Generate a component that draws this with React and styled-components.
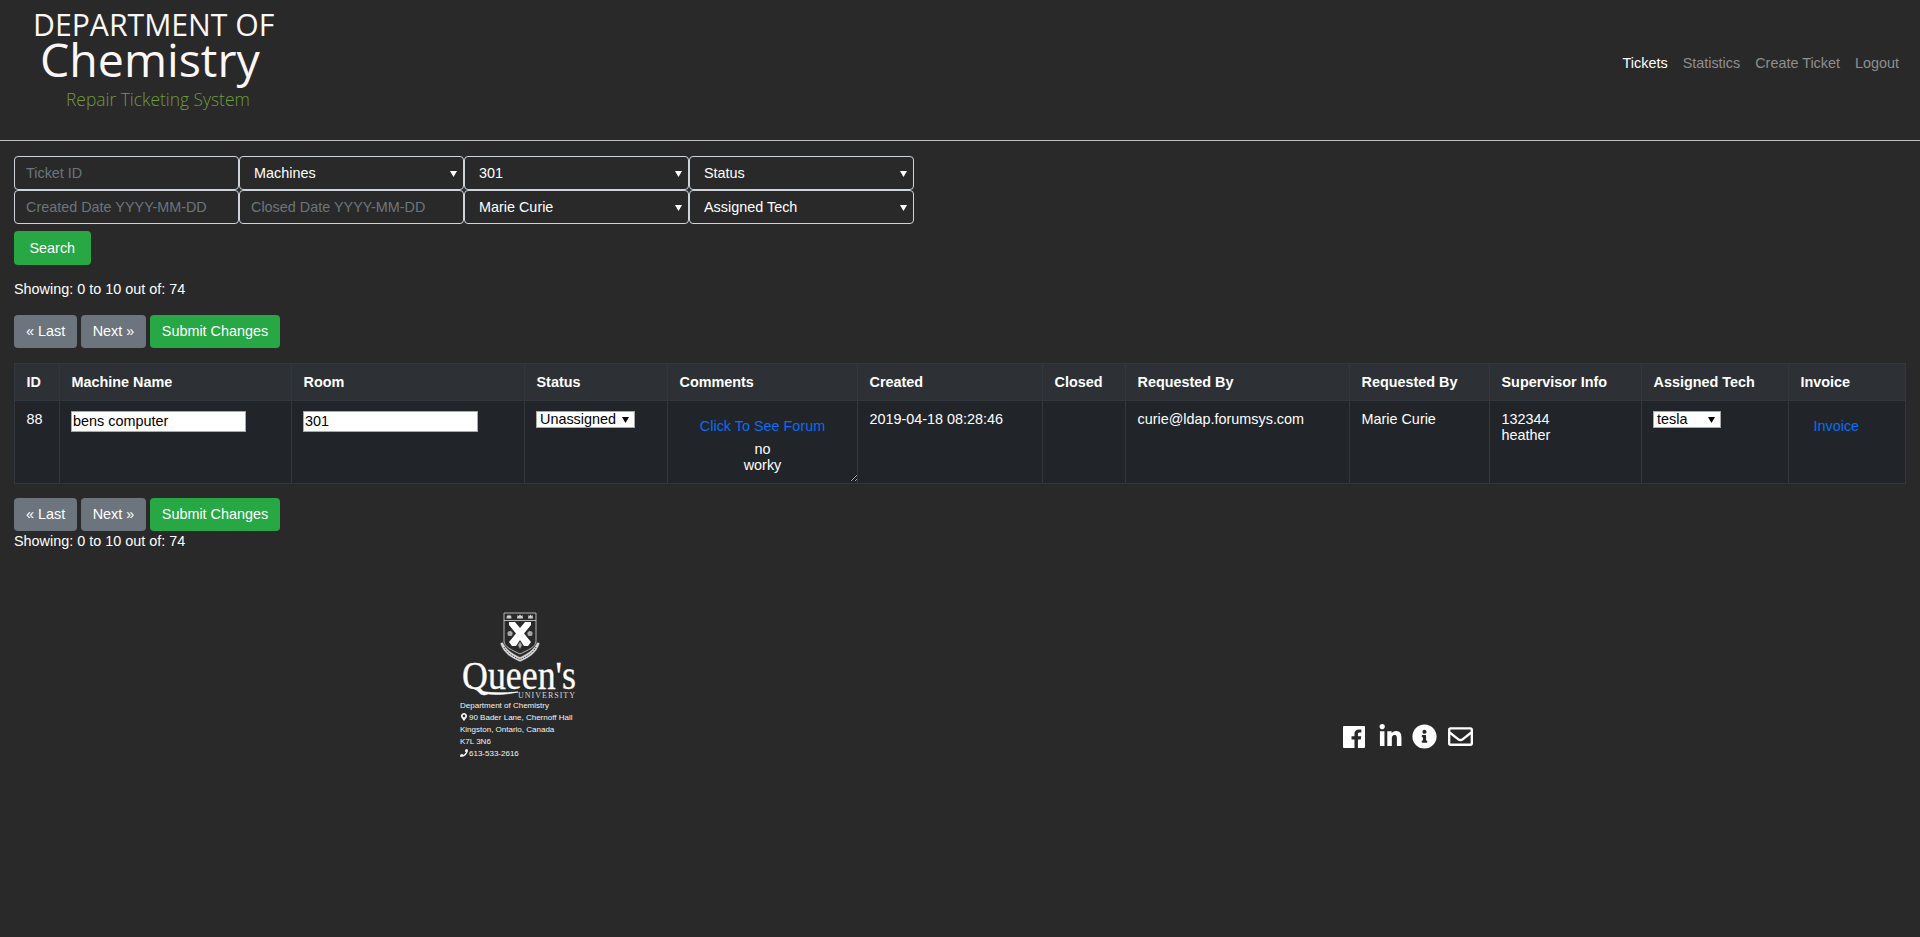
import React from "react";
import styled, { createGlobalStyle } from "styled-components";
import { FaLinkedinIn, FaInfoCircle, FaRegEnvelope, FaMapMarkerAlt, FaPhone } from "react-icons/fa";

const whiteCaret = "url(\"data:image/svg+xml,%3Csvg xmlns='http://www.w3.org/2000/svg' width='7' height='7'%3E%3Cpath d='M0 1h7L3.5 7z' fill='%23fff'/%3E%3C/svg%3E\")";
const blackCaret = "url(\"data:image/svg+xml,%3Csvg xmlns='http://www.w3.org/2000/svg' width='7' height='7'%3E%3Cpath d='M0 1h7L3.5 7z' fill='%23000'/%3E%3C/svg%3E\")";

const Global = createGlobalStyle`
  html, body { margin: 0; padding: 0; min-height: 100%; background: #292929; }
  body { font-family: "Liberation Sans", Arial, sans-serif; font-size: 14.4px; line-height: 21px; color: #fff; }
  * { box-sizing: border-box; }
`;

const Page = styled.div`
  min-height: 937px;
  background: #292929;
`;

const Header = styled.header`
  height: 141px;
  display: flex;
  justify-content: space-between;
  align-items: flex-start;
  padding: 0 21px 0 33px;
  border-bottom: 1px solid #bdbdbd;
`;

const Brand = styled.div`
  display: flex;
  flex-direction: column;
  align-items: flex-start;
  padding-top: 9px;
  font-family: "Open Sans", sans-serif;
  font-weight: 400;
  color: #fbf7f7;
`;

const BrandTop = styled.div`
  font-size: 30.2px;
  line-height: 32px;
`;

const BrandMain = styled.div`
  font-size: 46.5px;
  line-height: 36px;
  margin-left: 7px;
`;

const BrandSub = styled.div`
  font-size: 17.4px;
  font-weight: 300;
  line-height: 22px;
  margin-left: 33px;
  margin-top: 11px;
  color: #6f9a40;
`;

const Nav = styled.nav`
  display: flex;
  gap: 15px;
  margin-top: 53px;
`;

const NavLink = styled.a`
  color: ${(p) => (p.$active ? "#fff" : "#8f8f8f")};
  text-decoration: none;
`;

const Main = styled.main`
  padding: 15px 15px 0 14px;
`;

const FilterGrid = styled.form`
  display: grid;
  grid-template-columns: repeat(4, 225px);
  grid-auto-rows: 34px;
`;

const FilterInput = styled.input`
  height: 34px;
  padding: 0 11px;
  border: 1px solid #ced4da;
  border-radius: 4px;
  background: #292929;
  color: #fff;
  font: 14.4px "Liberation Sans", sans-serif;
  &::placeholder { color: #6c757d; opacity: 1; }
`;

const FilterSelect = styled.select`
  appearance: none;
  height: 34px;
  padding: 0 20px 0 14px;
  border: 1px solid #ced4da;
  border-radius: 4px;
  background: #292929 ${whiteCaret} no-repeat right 6px center;
  color: #fff;
  font: 14.4px "Liberation Sans", sans-serif;
`;

const Btn = styled.button`
  height: 33.6px;
  padding: 0 ${(p) => (p.$wide ? "15.5px" : "12px")};
  border: 0;
  border-radius: 4px;
  background: ${(p) => (p.$green ? "#28a745" : "#6c757d")};
  color: #fff;
  font: 14.4px "Liberation Sans", sans-serif;
`;

const SearchRow = styled.div`
  margin-top: 7px;
  display: flex;
`;

const Showing = styled.div`
  margin-top: ${(p) => p.$top || 0}px;
  height: 21px;
`;

const Pager = styled.div`
  display: flex;
  gap: 3.5px;
  margin-top: ${(p) => p.$top}px;
`;

const Table = styled.table`
  margin-top: 14.4px;
  width: 1891px;
  table-layout: fixed;
  border-collapse: collapse;
  background: #212529;
  border: 1px solid #32383e;
`;

const Th = styled.th`
  height: 37px;
  padding: 8px 11.5px 6px;
  text-align: left;
  font-weight: 700;
  background: #2d3136;
  border: 1px solid #32383e;
`;

const Td = styled.td`
  height: 83px;
  padding: 8px 11.5px 0;
  vertical-align: top;
  border: 1px solid #32383e;
`;

const CellInput = styled.input`
  display: block;
  width: 175px;
  height: 21px;
  margin: 2px 0 0 -0.5px;
  padding: 0 1px;
  border: 1px solid #a9a9a9;
  background: #fff;
  color: #000;
  font: 14.4px "Liberation Sans", sans-serif;
`;

const CellSelect = styled.select`
  appearance: none;
  display: block;
  width: ${(p) => p.$w}px;
  height: 17px;
  margin: 2px 0 0 -0.5px;
  padding: 0 0 0 3px;
  border: 1px solid #a9a9a9;
  border-radius: 0;
  background: #fff ${blackCaret} no-repeat right 5px center;
  color: #000;
  font: 14.4px/15px "Liberation Sans", sans-serif;
`;

const LinkBtn = styled.a`
  display: block;
  height: 34px;
  padding: 7px 13px;
  color: #0b6cf5;
  text-decoration: none;
  text-align: ${(p) => (p.$center ? "center" : "left")};
`;

const CommentBox = styled.textarea`
  display: block;
  width: calc(100% + 24px);
  height: 41px;
  margin: -2px -12px 0;
  padding: 0;
  border: 0;
  outline: 0;
  background: transparent;
  color: #fff;
  text-align: center;
  overflow: hidden;
  font: 14.4px/16.5px "Liberation Sans", sans-serif;
`;

const Stack = styled.div`
  line-height: 16px;
  margin-top: 2px;
`;

const Footer = styled.footer`
  display: flex;
  align-items: flex-end;
  padding: 60px 0 0 460px;
`;

const Contact = styled.div`
  width: 118px;
  display: flex;
  flex-direction: column;
`;

const LogoArt = styled.svg`
  display: block;
  width: 118px;
  height: 88px;
`;

const Address = styled.div`
  font-size: 8px;
  line-height: 12px;
  color: #f4f4f4;
  white-space: nowrap;
  svg { width: 8px; height: 8px; vertical-align: -1px; margin-right: 1px; }
`;

const Social = styled.div`
  display: flex;
  align-items: center;
  gap: 11px;
  margin: 0 0 11px 765px;
  color: #fff;
  font-size: 25px;
  line-height: 0;
`;

const FacebookIcon = styled.svg`
  width: 22px;
  height: 22px;
  margin-right: 2.4px;
`;

const LinkedinIcon = styled(FaLinkedinIn)`
  margin-right: -2px;
`;

const columns = [45, 232, 233, 143, 190, 185, 83, 224, 140, 152, 147, 117];
const heads = ["ID", "Machine Name", "Room", "Status", "Comments", "Created", "Closed", "Requested By", "Requested By", "Supervisor Info", "Assigned Tech", "Invoice"];

function FacebookSquare() {
  return (
    <FacebookIcon viewBox="0 0 24 24" aria-hidden="true">
      <path
        fillRule="evenodd"
        fill="#fff"
        d="M1 0h22a1 1 0 0 1 1 1v22a1 1 0 0 1-1 1h-6.700v-9.300h3.100l.5-3.600h-3.600V8.800c0-1 .3-1.800 1.800-1.800h1.900V3.800c-.3 0-1.500-.1-2.800-.1-2.800 0-4.700 1.700-4.700 4.800v2.600H9.300v3.600h3.200V24H1a1 1 0 0 1-1-1V1a1 1 0 0 1 1-1z"
      />
    </FacebookIcon>
  );
}

function QueensLogo() {
  return (
    <LogoArt viewBox="0 0 118 88" aria-label="Queen's University">
      <g fill="none" stroke="#d8d8d8" strokeWidth="0.8">
        <path d="M44 1h32v28c0 6-8 9-16 13-8-4-16-7-16-13z" />
        <path d="M44 8.500h32" />
      </g>
      <g fill="#cfcfcf">
        <path d="M47 3l1 1 1-1.500 1 1.500 1-1 .5 3.500h-5zM57.500 3l1 1 1.500-1.500 1.500 1.500 1-1 .5 3.500h-6zM68.500 3l1 1 1-1.500 1 1.500 1-1 .5 3.500h-5z" />
      </g>
      <path d="M49 10h6l5 6 5-6h6v3l-7 8.500 7 8.500-3 4h-4l-4-6-4 6h-4l-3-4 7-8.500-7-8.500z" fill="#fff" />
      <g fill="#a8a8a8">
        <circle cx="50" cy="21.500" r="2.600" />
        <circle cx="70" cy="21.500" r="2.600" />
        <path d="M60 30l2 3-2 4-2-4z" />
      </g>
      <path d="M40 31c3 11 13 16 20 19 7-3 17-8 20-19l-3-1c-3 8-11 12-17 15-6-3-14-7-17-15z" fill="#d6d6d6" stroke="#292929" strokeWidth="0.6" />
      <path d="M44 35c3 6 10 10 16 12.500 6-2.500 13-6.500 16-12.500" fill="none" stroke="#292929" strokeWidth="0.8" strokeDasharray="1.500 1" />
      <text x="2" y="77" fontFamily="'Liberation Serif', serif" fontSize="39" fill="#fff" stroke="#fff" strokeWidth="0.3" textLength="114" lengthAdjust="spacingAndGlyphs">Queen's</text>
      <path d="M10 73c7 7 18 9 48 7-20 4-38 4-48-7z" fill="#fff" stroke="#fff" strokeWidth="0.7" />
      <text x="58" y="86" fontFamily="'Liberation Serif', serif" fontSize="8" fill="#d8d8d8" textLength="57" lengthAdjust="spacing">UNIVERSITY</text>
    </LogoArt>
  );
}

export default function App() {
  return (
    <Page>
      <Global />
      <Header>
        <Brand>
          <BrandTop>DEPARTMENT OF</BrandTop>
          <BrandMain>Chemistry</BrandMain>
          <BrandSub>Repair Ticketing System</BrandSub>
        </Brand>
        <Nav>
          <NavLink $active href="#">Tickets</NavLink>
          <NavLink href="#">Statistics</NavLink>
          <NavLink href="#">Create Ticket</NavLink>
          <NavLink href="#">Logout</NavLink>
        </Nav>
      </Header>
      <Main>
        <FilterGrid>
          <FilterInput placeholder="Ticket ID" />
          <FilterSelect><option>Machines</option></FilterSelect>
          <FilterSelect><option>301</option></FilterSelect>
          <FilterSelect><option>Status</option></FilterSelect>
          <FilterInput placeholder="Created Date YYYY-MM-DD" />
          <FilterInput placeholder="Closed Date YYYY-MM-DD" />
          <FilterSelect><option>Marie Curie</option></FilterSelect>
          <FilterSelect><option>Assigned Tech</option></FilterSelect>
        </FilterGrid>
        <SearchRow><Btn $green $wide type="button">Search</Btn></SearchRow>
        <Showing $top={14}>Showing: 0 to 10 out of: 74</Showing>
        <Pager $top={15}>
          <Btn type="button">« Last</Btn>
          <Btn type="button">Next »</Btn>
          <Btn $green type="button">Submit Changes</Btn>
        </Pager>
        <Table>
          <colgroup>
            {columns.map((w, i) => <col key={i} style={{ width: w }} />)}
          </colgroup>
          <thead>
            <tr>{heads.map((h, i) => <Th key={i}>{h}</Th>)}</tr>
          </thead>
          <tbody>
            <tr>
              <Td>88</Td>
              <Td><CellInput defaultValue="bens computer" /></Td>
              <Td><CellInput defaultValue="301" /></Td>
              <Td><CellSelect $w={99}><option>Unassigned</option></CellSelect></Td>
              <Td>
                <LinkBtn $center href="#">Click To See Forum</LinkBtn>
                <CommentBox defaultValue={"no\nworky"} />
              </Td>
              <Td>2019-04-18 08:28:46</Td>
              <Td></Td>
              <Td>curie@ldap.forumsys.com</Td>
              <Td>Marie Curie</Td>
              <Td><Stack>132344<br />heather</Stack></Td>
              <Td><CellSelect $w={68}><option>tesla</option></CellSelect></Td>
              <Td><LinkBtn href="#">Invoice</LinkBtn></Td>
            </tr>
          </tbody>
        </Table>
        <Pager $top={14}>
          <Btn type="button">« Last</Btn>
          <Btn type="button">Next »</Btn>
          <Btn $green type="button">Submit Changes</Btn>
        </Pager>
        <Showing>Showing: 0 to 10 out of: 74</Showing>
      </Main>
      <Footer>
        <Contact>
          <QueensLogo />
          <Address>
            Department of Chemistry<br />
            <FaMapMarkerAlt />90 Bader Lane, Chernoff Hall<br />
            Kingston, Ontario, Canada<br />
            K7L 3N6<br />
            <FaPhone />613-533-2616
          </Address>
        </Contact>
        <Social>
          <FacebookSquare />
          <LinkedinIcon />
          <FaInfoCircle />
          <FaRegEnvelope />
        </Social>
      </Footer>
    </Page>
  );
}
